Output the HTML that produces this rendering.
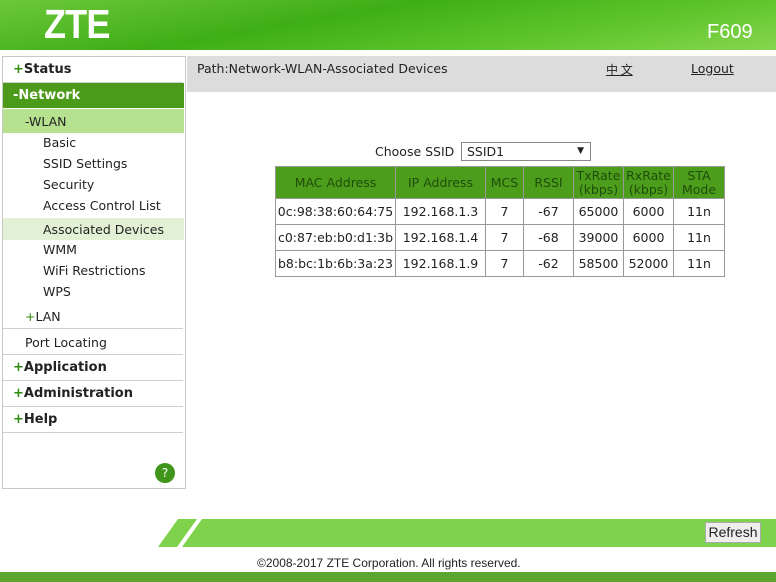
<!DOCTYPE html>
<html><head><meta charset="utf-8"><style>
*{margin:0;padding:0;box-sizing:border-box}
body{width:776px;height:582px;position:relative;background:#fff;font-family:"DejaVu Sans","Liberation Sans",sans-serif;font-size:12.5px;color:#222;overflow:hidden}
.a{position:absolute;white-space:nowrap}
#hdr{left:0;top:0;width:776px;height:50px;background:linear-gradient(170deg,#6dc83a 0%,#3fae17 40%,#5cc42a 70%,#86d64e 100%)}
#side{left:2px;top:56px;width:184px;height:433px;border:1px solid #c8c8c8}
.sep{position:absolute;left:3px;width:180px;height:1px;background:#cfcfcf}
.b{font-weight:bold;font-size:13px}
.p{color:#2e8b12}
table{border-collapse:collapse;position:absolute;left:275px;top:166px}
td{border:1px solid #999;text-align:center;font-size:12.5px;height:26px;padding:0}
th{border:1px solid #999;background:#4c9d1c;color:#1f4d0a;font-weight:normal;font-size:12.5px;height:32px;line-height:14px}
</style></head><body>
<div class="a" id="hdr"></div>
<div class="a" style="left:44px;top:1px;font:bold 41px 'Liberation Sans',sans-serif;color:#fff;letter-spacing:-1px;transform:scaleX(0.88);transform-origin:left">ZTE</div>
<div class="a" style="left:707px;top:21px;font:20px 'Liberation Sans',sans-serif;color:#fff">F609</div>

<div class="a" id="side"></div>
<div class="a b" style="left:13px;top:62px"><span class="p">+</span>Status</div>
<div class="sep" style="top:82px"></div>
<div class="a" style="left:3px;top:83px;width:181px;height:25px;background:#4c9a1a"></div>
<div class="a b" style="left:13px;top:88px;color:#fff">-Network</div>
<div class="a" style="left:3px;top:109px;width:181px;height:24px;background:#b6e28f"></div>
<div class="a" style="left:25px;top:114px">-WLAN</div>
<div class="a" style="left:43px;top:135px">Basic</div>
<div class="a" style="left:43px;top:156px">SSID Settings</div>
<div class="a" style="left:43px;top:177px">Security</div>
<div class="a" style="left:43px;top:198px">Access Control List</div>
<div class="a" style="left:3px;top:218px;width:181px;height:22px;background:#e2f1d5"></div>
<div class="a" style="left:43px;top:222px">Associated Devices</div>
<div class="a" style="left:43px;top:242px">WMM</div>
<div class="a" style="left:43px;top:263px">WiFi Restrictions</div>
<div class="a" style="left:43px;top:284px">WPS</div>
<div class="a" style="left:25px;top:309px"><span class="p">+</span>LAN</div>
<div class="sep" style="top:328px"></div>
<div class="a" style="left:25px;top:335px">Port Locating</div>
<div class="sep" style="top:354px"></div>
<div class="a b" style="left:13px;top:360px"><span class="p">+</span>Application</div>
<div class="sep" style="top:380px"></div>
<div class="a b" style="left:13px;top:386px"><span class="p">+</span>Administration</div>
<div class="sep" style="top:406px"></div>
<div class="a b" style="left:13px;top:412px"><span class="p">+</span>Help</div>
<div class="sep" style="top:432px"></div>
<div class="a" style="left:155px;top:463px;width:20px;height:20px;border-radius:50%;background:#3f961b;color:#fff;font-size:12px;text-align:center;line-height:20px">?</div>

<div class="a" style="left:187px;top:56px;width:589px;height:36px;background:#dcdcdc"></div>
<div class="a" style="left:197px;top:61px">Path:Network-WLAN-Associated Devices</div>
<div class="a" style="left:606px;top:61px;text-decoration:underline;font-family:'Noto Sans CJK SC',sans-serif;font-size:12px">中 文</div>
<div class="a" style="left:691px;top:61px;text-decoration:underline">Logout</div>

<div class="a" style="left:375px;top:144px">Choose SSID</div>
<div class="a" style="left:461px;top:142px;width:130px;height:19px;border:1px solid #888;padding-left:5px;line-height:17px">SSID1<span style="position:absolute;right:6px;font-size:9px">▼</span></div>

<table>
<tr><th style="width:120px">MAC Address</th><th style="width:90px">IP Address</th><th style="width:38px">MCS</th><th style="width:50px">RSSI</th><th style="width:50px">TxRate<br>(kbps)</th><th style="width:50px">RxRate<br>(kbps)</th><th style="width:51px">STA<br>Mode</th></tr>
<tr><td>0c:98:38:60:64:75</td><td>192.168.1.3</td><td>7</td><td>-67</td><td>65000</td><td>6000</td><td>11n</td></tr>
<tr><td>c0:87:eb:b0:d1:3b</td><td>192.168.1.4</td><td>7</td><td>-68</td><td>39000</td><td>6000</td><td>11n</td></tr>
<tr><td>b8:bc:1b:6b:3a:23</td><td>192.168.1.9</td><td>7</td><td>-62</td><td>58500</td><td>52000</td><td>11n</td></tr>
</table>

<svg class="a" style="left:0;top:519px" width="776" height="28"><polygon points="158,28 178,0 197,0 177,28" fill="#7fd24b"/><polygon points="182,28 202,0 776,0 776,28" fill="#7fd24b"/></svg>
<div class="a" style="left:705px;top:522px;width:56px;height:21px;background:#eee;border:1px solid #aaa;font:14px 'Liberation Sans',sans-serif;text-align:center;line-height:19px">Refresh</div>
<div class="a" style="left:257px;top:556px;font:12px 'Liberation Sans',sans-serif">©2008-2017 ZTE Corporation. All rights reserved.</div>
<div class="a" style="left:0;top:572px;width:776px;height:10px;background:#5ca52e"></div>
</body></html>
